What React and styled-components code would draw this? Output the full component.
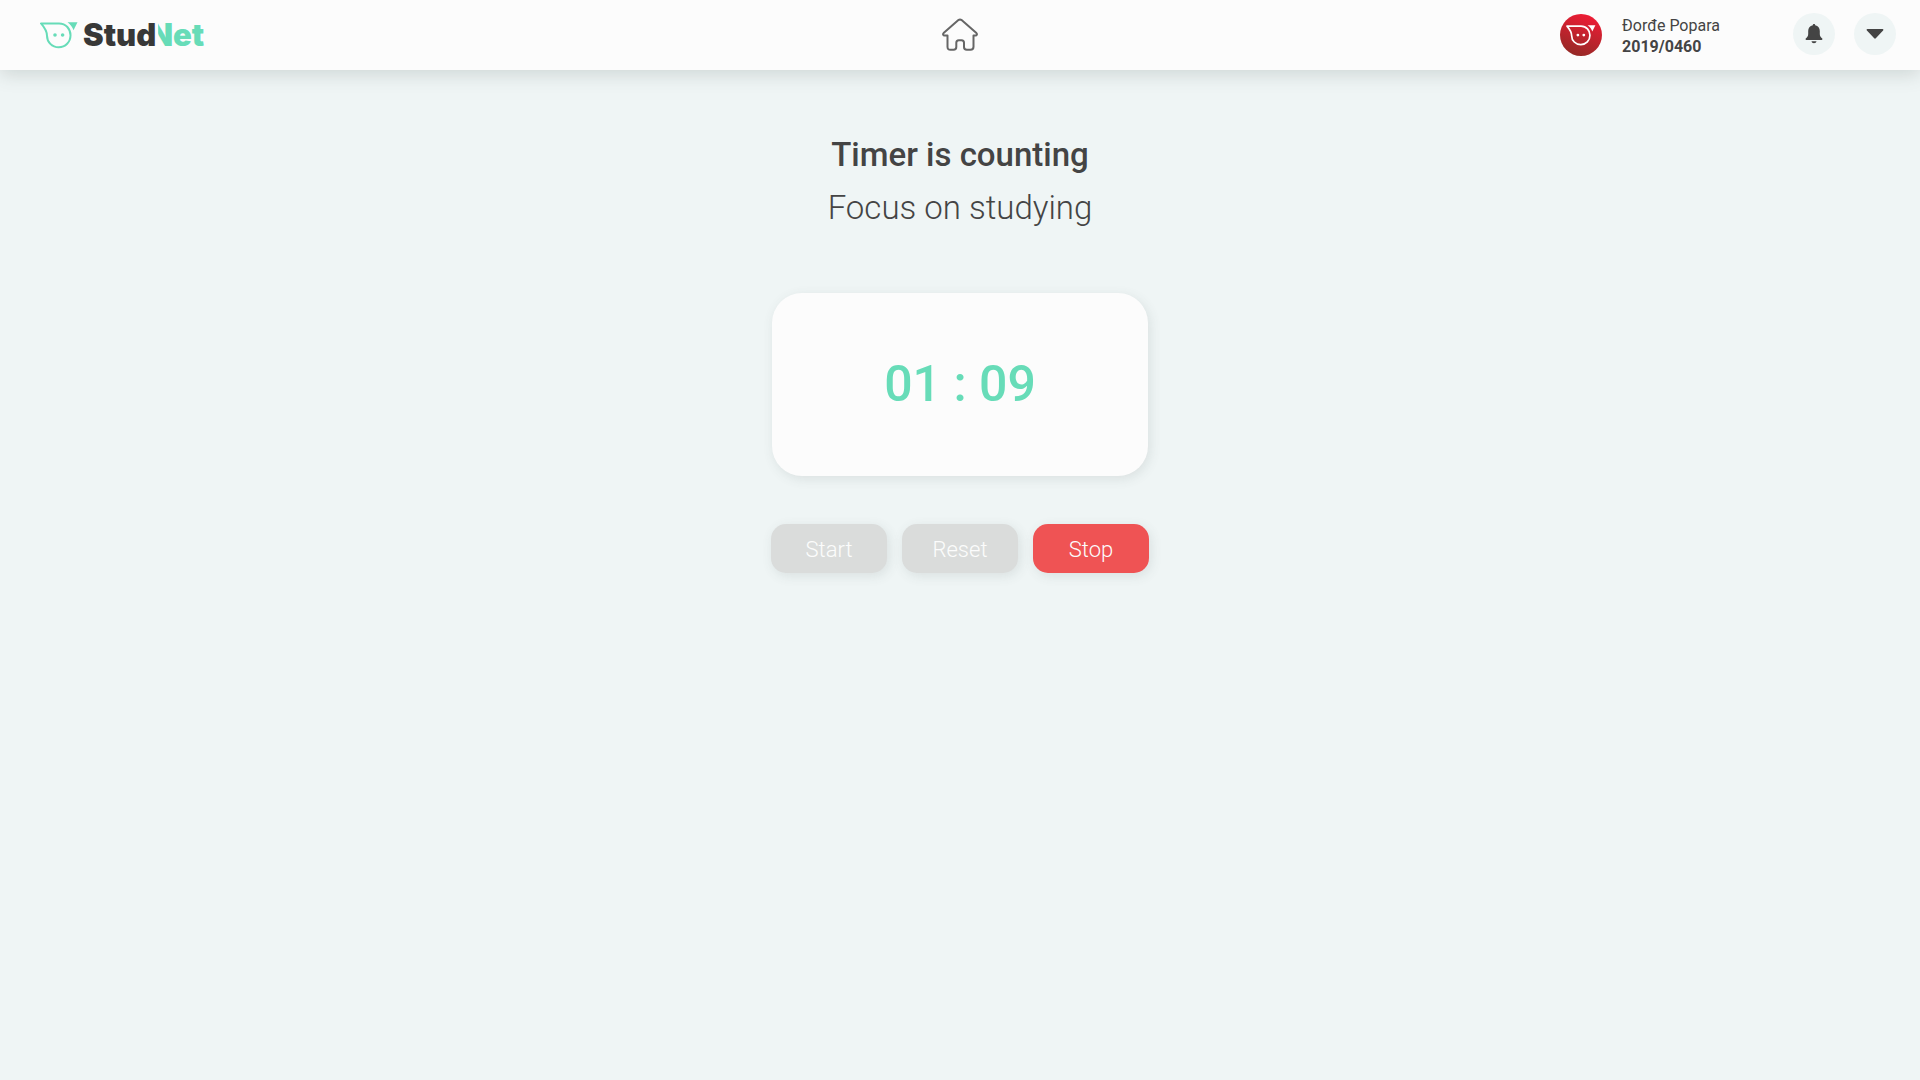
import React from "react";
import styled, { createGlobalStyle } from "styled-components";

const GlobalStyle = createGlobalStyle`
  *, *::before, *::after { box-sizing: border-box; }
  body {
    margin: 0;
    min-height: 100vh;
    background: #eff5f5;
    color: #444;
    font-family: Roboto, "Noto Sans", sans-serif;
  }
`;

const Header = styled.header`
  display: grid;
  grid-template-columns: 1fr auto 1fr;
  align-items: center;
  height: 70px;
  padding: 0 24px 0 40px;
  background: #fcfcfc;
  box-shadow: 0 4px 18px rgba(68, 84, 80, 0.2);
`;

const Logo = styled.a`
  display: flex;
  align-items: center;
  justify-self: start;
  gap: 5px;
  color: #67dcb8;
  text-decoration: none;
`;

const Wordmark = styled.span`
  font-family: Inter, sans-serif;
  font-size: 31px;
  font-weight: 900;
  line-height: 40px;
`;

const Ink = styled.span`
  color: #383838;
`;

const CutLetter = styled.span`
  display: inline-block;
  margin-left: -7px;
  clip-path: inset(0 0 0 9px);
`;

const HomeLink = styled.a`
  display: flex;
  margin-right: 16px;
  color: #666;
`;

const Tools = styled.div`
  display: flex;
  align-items: center;
  justify-self: end;
`;

const Profile = styled.a`
  display: flex;
  align-items: center;
  gap: 20px;
  margin-right: 54px;
  color: #444;
  font-size: 16px;
  line-height: 21px;
  text-decoration: none;
`;

const UserText = styled.span`
  display: flex;
  flex-direction: column;
  padding-top: 2px;
`;

const UserIndex = styled.strong`
  font-weight: 700;
`;

const RoundButton = styled.button`
  display: grid;
  place-items: center;
  width: 42px;
  height: 42px;
  margin: 0 0 2px 19px;
  padding: 0;
  border: 0;
  border-radius: 50%;
  background: #eff5f5;
  color: #444;
  cursor: pointer;
`;

const Main = styled.main`
  display: flex;
  flex-direction: column;
  align-items: center;
  padding: 61px 20px;
`;

const Title = styled.h1`
  margin: 0;
  font-size: 33px;
  font-weight: 500;
  line-height: 48px;
`;

const Subtitle = styled.p`
  margin: 5px 0 0;
  font-size: 33px;
  font-weight: 300;
  line-height: 48px;
`;

const TimerPanel = styled.section`
  width: 100%;
  max-width: 378px;
  margin-top: 61px;
`;

const Clock = styled.div`
  display: grid;
  place-items: center;
  height: 183px;
  margin: 0 1px;
  padding-bottom: 2px;
  border-radius: 30px;
  background: #fcfcfc;
  box-shadow: 2px 3px 12px rgba(68, 84, 80, 0.12);
  color: #67dcb8;
  font-size: 50px;
  font-weight: 500;
  line-height: 60px;
`;

const Actions = styled.div`
  display: grid;
  grid-template-columns: repeat(3, 1fr);
  gap: 15px;
  margin-top: 48px;
`;

const ActionButton = styled.button`
  height: 49px;
  padding: 1px 0 0;
  border: 0;
  border-radius: 15px;
  background: ${({ $danger }) => ($danger ? "#ef5354" : "#dadcdb")};
  box-shadow: 2px 3px 12px rgba(68, 84, 80, 0.12);
  color: #fcfcfc;
  font-family: inherit;
  font-size: 22px;
  font-weight: 300;
  cursor: ${({ disabled }) => (disabled ? "default" : "pointer")};
`;

function Mascot({ width, height, stroke }) {
  return (
    <svg width={width} height={height} viewBox="0 0 38 27" fill="none" aria-hidden="true">
      <path
        d="M1 1.4H19C26 1.4 30.5 7 30.5 13.3C30.5 20 25.5 25.3 18.7 25.3C12 25.3 7 20 7 13.7C7 9 5 6 1 1.4Z"
        stroke="currentColor"
        strokeWidth={stroke}
        strokeLinejoin="round"
      />
      <path d="M27.5 0.3H37.5L33.5 8.2C32.5 5.2 30.5 2.5 27.5 0.3Z" fill="currentColor" />
      <circle cx="15" cy="13" r="1.8" fill="currentColor" />
      <circle cx="22.6" cy="13" r="1.8" fill="currentColor" />
    </svg>
  );
}

const AvatarCircle = styled.span`
  display: grid;
  place-items: center;
  width: 42px;
  height: 42px;
  border-radius: 50%;
  background: linear-gradient(200deg, #ee1c35 10%, #8f2a25 95%);
  color: #fff;
`;

export default function App() {
  return (
    <>
      <GlobalStyle />
      <Header>
        <Logo href="#home">
          <Mascot width={38} height={27} stroke={2} />
          <Wordmark>
            <Ink>Stud</Ink><CutLetter>N</CutLetter>et
          </Wordmark>
        </Logo>
        <HomeLink href="#home" aria-label="Home">
          <svg width="36" height="34" viewBox="0 0 36 34" fill="none" stroke="currentColor" strokeWidth="2" strokeLinejoin="round" strokeLinecap="round" aria-hidden="true">
            <path d="M5.5 17.5H2.6C1 17.5 .7 16 1.6 15.1L16.4 2.1C17.4 1.3 18.6 1.3 19.6 2.1L34.4 15.1C35.3 16 35 17.5 33.4 17.5H31.5V28.8C31.5 30.9 30.6 31.8 28.5 31.8H24.8C22.9 31.8 22 30.9 22 29V24.7C22 23 21.2 22.2 19.5 22.2H16.8C15.1 22.2 14.3 23 14.3 24.7V29C14.3 30.9 13.4 31.8 11.5 31.8H8.5C6.4 31.8 5.5 30.9 5.5 28.8Z" />
          </svg>
        </HomeLink>
        <Tools>
          <Profile href="#profile">
            <AvatarCircle>
              <Mascot width={30} height={21} stroke={2.2} />
            </AvatarCircle>
            <UserText>
              <span>Đorđe Popara</span>
              <UserIndex>2019/0460</UserIndex>
            </UserText>
          </Profile>
          <RoundButton type="button" aria-label="Notifications">
            <svg width="18" height="20" viewBox="0 0 18 20" fill="currentColor" aria-hidden="true">
              <path d="M9 0C9.7 0 10.2.5 10.2 1.3C13.2 1.9 14.8 4.1 14.8 7V10C14.8 12.2 15.8 13.3 17 14.3C17.8 15 17.5 16 16.6 16H1.4C.5 16 .2 15 1 14.3C2.2 13.3 3.2 12.2 3.2 10V7C3.2 4.1 4.8 1.9 7.8 1.3C7.8.5 8.3 0 9 0ZM6.5 17.3H11.5C11.3 18.6 10.4 19.3 9 19.3C7.6 19.3 6.7 18.6 6.5 17.3Z" />
            </svg>
          </RoundButton>
          <RoundButton type="button" aria-label="Open menu">
            <svg width="18" height="12" viewBox="0 0 18 12" fill="currentColor" aria-hidden="true">
              <path d="M1.4 1H16.6C17.4 1 17.7 1.9 17.1 2.5L9.8 10.3C9.3 10.8 8.7 10.8 8.2 10.3L.9 2.5C.3 1.9.6 1 1.4 1Z" />
            </svg>
          </RoundButton>
        </Tools>
      </Header>
      <Main>
        <Title>Timer is counting</Title>
        <Subtitle>Focus on studying</Subtitle>
        <TimerPanel aria-label="Study timer">
          <Clock role="timer">01 : 09</Clock>
          <Actions>
            <ActionButton type="button" disabled>Start</ActionButton>
            <ActionButton type="button" disabled>Reset</ActionButton>
            <ActionButton type="button" $danger>Stop</ActionButton>
          </Actions>
        </TimerPanel>
      </Main>
    </>
  );
}
